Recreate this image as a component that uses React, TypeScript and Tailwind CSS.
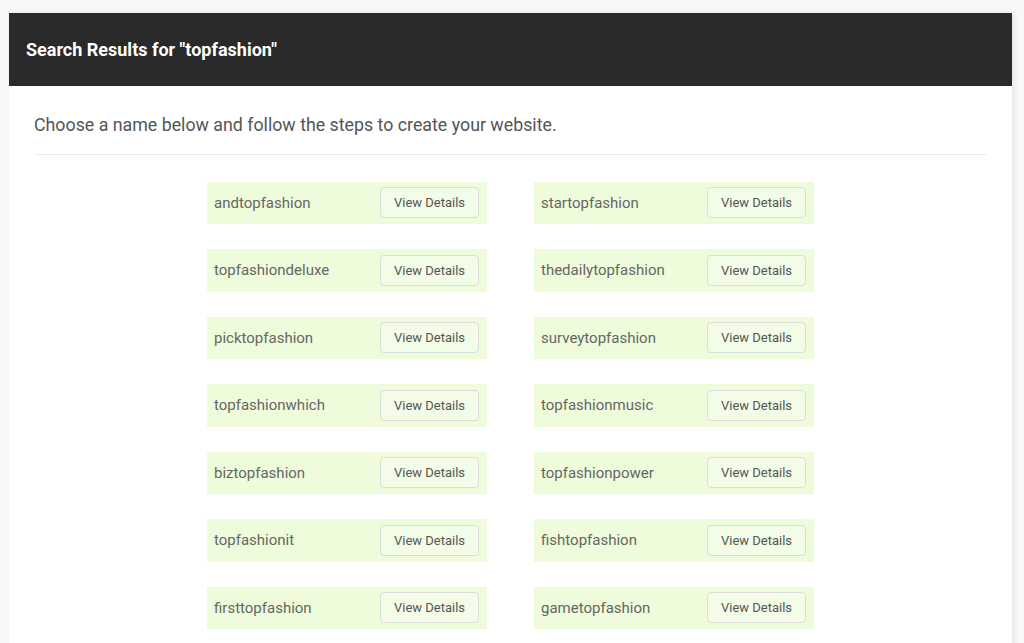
import React from "react";

const left = ["andtopfashion","topfashiondeluxe","picktopfashion","topfashionwhich","biztopfashion","topfashionit","firsttopfashion"];
const right = ["startopfashion","thedailytopfashion","surveytopfashion","topfashionmusic","topfashionpower","fishtopfashion","gametopfashion"];

function Item({ name }: { name: string }) {
  return (
    <div className="flex h-[42.5px] w-[280px] items-center justify-between bg-[#eefcdb] pl-[7px] pr-[8px]">
      <span className="text-[15px] text-[#666]">{name}</span>
      <button className="h-[31px] w-[99px] rounded-[4px] border border-[#dcdcdc] bg-[#f2fce6] text-[13px] text-[#555]">View Details</button>
    </div>
  );
}

export default function App() {
  const rows = left.map((l, i) => [l, right[i]]);
  return (
    <div className="min-h-[643px] bg-[#f8f8f8] pl-[9px] pr-[12px] pt-[13px]" style={{ fontFamily: "Roboto, 'Liberation Sans', sans-serif" }}>
      <div className="bg-white shadow-[2px_0_6px_rgba(0,0,0,0.08)]">
        <div className="flex h-[73px] items-center bg-[#2a2a2a] pl-[17px]">
          <h1 className="text-[18px] font-bold text-white">Search Results for "topfashion"</h1>
        </div>
        <div className="px-[25px] pt-[26px]">
          <p className="text-[17.8px] text-[#555]">Choose a name below and follow the steps to create your website.</p>
          <div className="mt-[15px] h-px bg-[#ececec]" />
          <div className="flex flex-col items-center gap-y-[25px] pb-[40px] pt-[27px]">
            {rows.map(([a, b]) => (
              <div key={a} className="flex gap-x-[47px]">
                <Item name={a} />
                <Item name={b} />
              </div>
            ))}
          </div>
        </div>
      </div>
    </div>
  );
}
